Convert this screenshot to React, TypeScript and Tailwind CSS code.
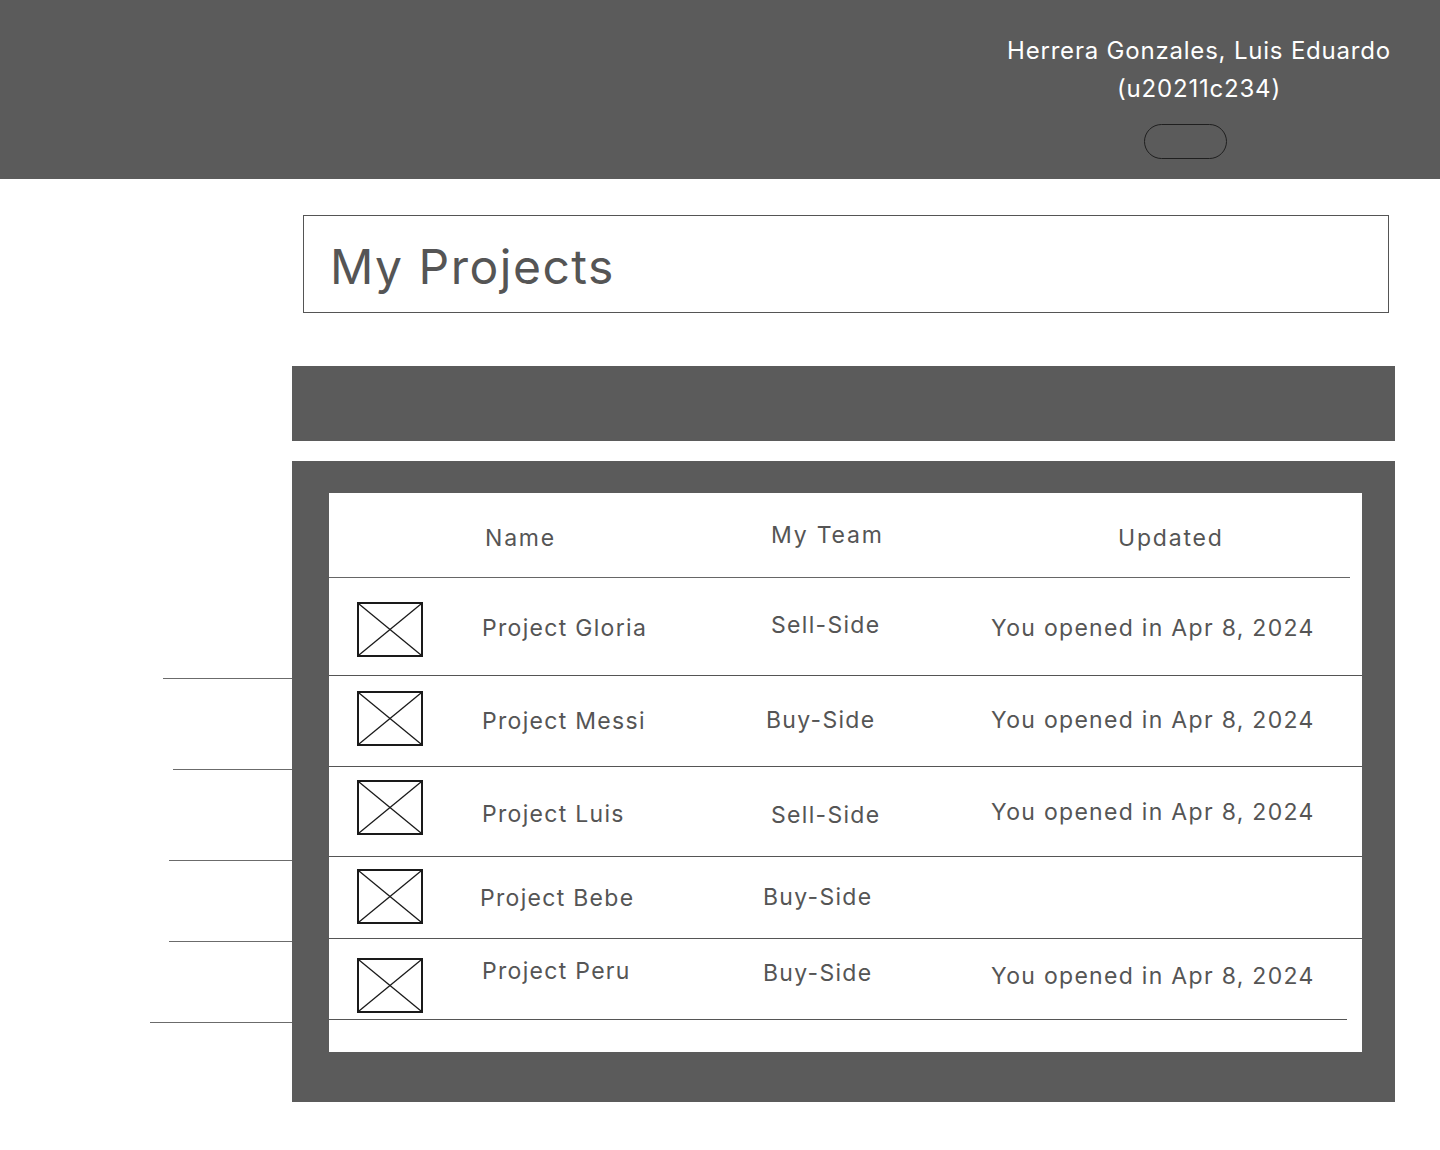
import React from "react";

type Row = {
  name: string;
  team: string;
  date: string;
  rowH: string;
  iconMt: string;
  nameMt: string;
  teamMt: string;
  dateMt: string;
  teamMl: string;
  nameMl: string;
};

const rows: Row[] = [
  { name: "Project Gloria", team: "Sell-Side", date: "You opened in Apr 8, 2024", rowH: "h-[98px]", iconMt: "mt-[24px]", nameMt: "mt-[35px]", teamMt: "mt-[32px]", dateMt: "mt-[35px]", teamMl: "ml-0", nameMl: "ml-0" },
  { name: "Project Messi", team: "Buy-Side", date: "You opened in Apr 8, 2024", rowH: "h-[91px]", iconMt: "mt-[15px]", nameMt: "mt-[30px]", teamMt: "mt-[29px]", dateMt: "mt-[29px]", teamMl: "-ml-[5px]", nameMl: "ml-0" },
  { name: "Project Luis", team: "Sell-Side", date: "You opened in Apr 8, 2024", rowH: "h-[90px]", iconMt: "mt-[13px]", nameMt: "mt-[32px]", teamMt: "mt-[33px]", dateMt: "mt-[30px]", teamMl: "ml-0", nameMl: "ml-0" },
  { name: "Project Bebe", team: "Buy-Side", date: "", rowH: "h-[82px]", iconMt: "mt-[12px]", nameMt: "mt-[26px]", teamMt: "mt-[25px]", dateMt: "mt-0", teamMl: "-ml-[8px]", nameMl: "-ml-[2px]" },
  { name: "Project Peru", team: "Buy-Side", date: "You opened in Apr 8, 2024", rowH: "h-[81px]", iconMt: "mt-[19px]", nameMt: "mt-[17px]", teamMt: "mt-[19px]", dateMt: "mt-[22px]", teamMl: "-ml-[8px]", nameMl: "ml-0" },
];

const stubs = [
  { mt: "mt-0", ml: "ml-[163px]" },
  { mt: "mt-[90px]", ml: "ml-[173px]" },
  { mt: "mt-[90px]", ml: "ml-[169px]" },
  { mt: "mt-[80px]", ml: "ml-[169px]" },
  { mt: "mt-[80px]", ml: "ml-[150px]" },
];

const Placeholder = () => (
  <svg width="66" height="55" viewBox="0 0 66 55" className="block">
    <rect x="1" y="1" width="64" height="53" fill="white" stroke="#1a1a1a" strokeWidth="2" />
    <line x1="2" y1="2" x2="64" y2="53" stroke="#1a1a1a" strokeWidth="1.3" />
    <line x1="64" y1="2" x2="2" y2="53" stroke="#1a1a1a" strokeWidth="1.3" />
  </svg>
);

const App: React.FC = () => {
  return (
    <div className="min-h-[1150px] bg-white font-['Inter','Liberation_Sans',sans-serif] text-[#555]">
      {/* top bar */}
      <div className="h-[179px] bg-[#5b5b5b] flex justify-end pr-[49px]">
        <div className="flex flex-col items-center pt-[32px] text-white text-[24px] leading-[38px] tracking-[0.8px]">
          <span>Herrera Gonzales, Luis Eduardo</span>
          <span>(u20211c234)</span>
          <button className="mt-[16px] mr-[28px] w-[83px] h-[35px] rounded-full border border-[#1f1f1f]"></button>
        </div>
      </div>

      <div className="flex">
        {/* stray row lines on the left */}
        <div className="w-[292px] pt-[499px] flex flex-col">
          {stubs.map((s, i) => (
            <div key={i} className={`h-px bg-[#6b6b6b] ${s.mt} ${s.ml}`} />
          ))}
        </div>

        <div className="w-[1103px] flex flex-col">
          <div className="mt-[36px] ml-[11px] w-[1086px] h-[98px] border border-[#555] flex items-center pl-[26px]">
            <h1 className="text-[48px] leading-none tracking-[1.5px] text-[#555] pt-[6px]">My Projects</h1>
          </div>

          <div className="mt-[53px] h-[75px] bg-[#5b5b5b]" />

          <div className="mt-[20px] h-[641px] bg-[#5b5b5b] pt-[32px] pl-[37px] pr-[33px]">
            <div className="bg-white h-[559px] flex flex-col">
              {/* column heads */}
              <div className="h-[85px] mr-[12px] border-b border-[#666] grid grid-cols-[156px_286px_347px_1fr] text-[23px] leading-[30px] tracking-[1.8px]">
                <div />
                <span className="mt-[30px]">Name</span>
                <span className="mt-[27px]">My Team</span>
                <span className="mt-[30px]">Updated</span>
              </div>

              {rows.map((r, i) => (
                <div
                  key={i}
                  className={`${r.rowH} border-b border-[#555] grid grid-cols-[153px_289px_220px_1fr] text-[23px] leading-[30px] tracking-[1.3px] ${i === rows.length - 1 ? "mr-[15px]" : ""}`}
                >
                  <div className={`pl-[28px] ${r.iconMt}`}>
                    <Placeholder />
                  </div>
                  <span className={`${r.nameMt} ${r.nameMl}`}>{r.name}</span>
                  <span className={`${r.teamMt} ${r.teamMl}`}>{r.team}</span>
                  <span className={r.dateMt}>{r.date}</span>
                </div>
              ))}
            </div>
          </div>
        </div>
      </div>
    </div>
  );
};

export default App;
